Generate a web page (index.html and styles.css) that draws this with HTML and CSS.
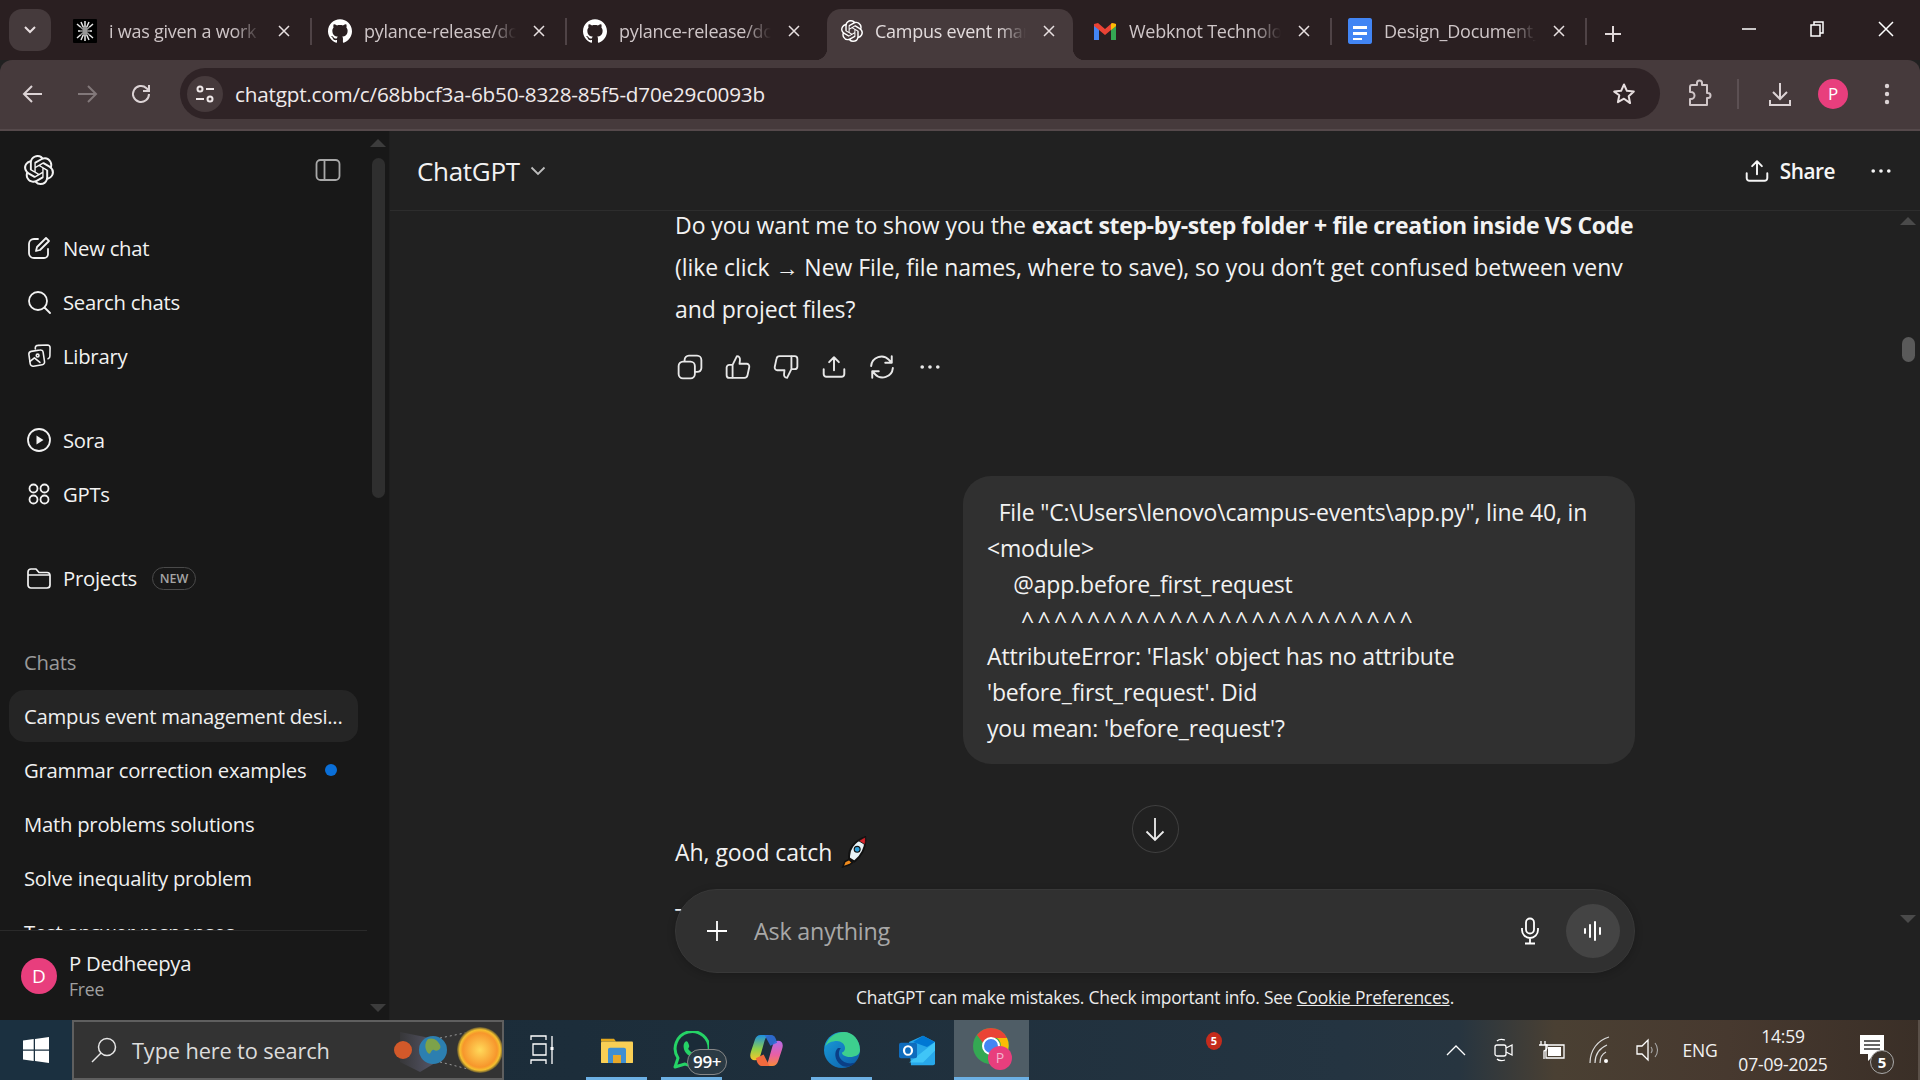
FILE: index.html
```html
<!DOCTYPE html>
<html lang="en">
<head>
<meta charset="utf-8">
<title>Campus event management</title>
<link rel="stylesheet" href="styles.css">
</head>
<body>
<svg class="defs" width="0" height="0">
  <symbol id="oai" viewBox="0 0 24 24"><path fill="currentColor" d="M22.2819 9.8211a5.9847 5.9847 0 0 0-.5157-4.9108 6.0462 6.0462 0 0 0-6.5098-2.9A6.0651 6.0651 0 0 0 4.9807 4.1818a5.9847 5.9847 0 0 0-3.9977 2.9 6.0462 6.0462 0 0 0 .7427 7.0966 5.98 5.98 0 0 0 .511 4.9107 6.051 6.051 0 0 0 6.5146 2.9001A5.9847 5.9847 0 0 0 13.2599 24a6.0557 6.0557 0 0 0 5.7718-4.2058 5.9894 5.9894 0 0 0 3.9977-2.9001 6.0557 6.0557 0 0 0-.7475-7.0729zm-9.022 12.6081a4.4755 4.4755 0 0 1-2.8764-1.0408l.1419-.0804 4.7783-2.7582a.7948.7948 0 0 0 .3927-.6813v-6.7369l2.02 1.1686a.071.071 0 0 1 .038.052v5.5826a4.504 4.504 0 0 1-4.4945 4.4944zm-9.6607-4.1254a4.4708 4.4708 0 0 1-.5346-3.0137l.142.0852 4.783 2.7582a.7712.7712 0 0 0 .7806 0l5.8428-3.3685v2.3324a.0804.0804 0 0 1-.0332.0615L9.74 19.9502a4.4992 4.4992 0 0 1-6.1408-1.6464zM2.3408 7.8956a4.485 4.485 0 0 1 2.3655-1.9728V11.6a.7664.7664 0 0 0 .3879.6765l5.8144 3.3543-2.0201 1.1685a.0757.0757 0 0 1-.071 0l-4.8303-2.7865A4.504 4.504 0 0 1 2.3408 7.872zm16.5963 3.8558L13.1038 8.364 15.1192 7.2a.0757.0757 0 0 1 .071 0l4.8303 2.7913a4.4944 4.4944 0 0 1-.6765 8.1042v-5.6772a.79.79 0 0 0-.407-.667zm2.0107-3.0231l-.142-.0852-4.7735-2.7818a.7759.7759 0 0 0-.7854 0L9.409 9.2297V6.8974a.0662.0662 0 0 1 .0284-.0615l4.8303-2.7866a4.4992 4.4992 0 0 1 6.6802 4.66zM8.3065 12.863l-2.02-1.1638a.0804.0804 0 0 1-.038-.0567V6.0742a4.4992 4.4992 0 0 1 7.3757-3.4537l-.142.0805L8.704 5.459a.7948.7948 0 0 0-.3927.6813zm1.0976-2.3654l2.602-1.4998 2.6069 1.4998v2.9994l-2.5974 1.4997-2.6067-1.4997Z"/></symbol>
  <symbol id="gh" viewBox="0 0 24 24"><path fill="currentColor" d="M12 .297c-6.63 0-12 5.373-12 12 0 5.303 3.438 9.8 8.205 11.385.6.113.82-.258.82-.577 0-.285-.01-1.04-.015-2.04-3.338.724-4.042-1.61-4.042-1.61C4.422 18.07 3.633 17.7 3.633 17.7c-1.087-.744.084-.729.084-.729 1.205.084 1.838 1.236 1.838 1.236 1.07 1.835 2.809 1.305 3.495.998.108-.776.417-1.305.76-1.605-2.665-.3-5.466-1.332-5.466-5.93 0-1.31.465-2.38 1.235-3.22-.135-.303-.54-1.523.105-3.176 0 0 1.005-.322 3.3 1.23.96-.267 1.98-.399 3-.405 1.02.006 2.04.138 3 .405 2.28-1.552 3.285-1.23 3.285-1.23.645 1.653.24 2.873.12 3.176.765.84 1.23 1.91 1.23 3.22 0 4.61-2.805 5.625-5.475 5.92.42.36.81 1.096.81 2.22 0 1.606-.015 2.896-.03 3.286 0 .315.21.69.825.57C20.565 22.092 24 17.592 24 12.297c0-6.627-5.373-12-12-12"/></symbol>
  <symbol id="x" viewBox="0 0 14 14"><path d="M2 2l10 10M12 2L2 12" fill="none" stroke="currentColor" stroke-width="1.5"/></symbol>
  <symbol id="share" viewBox="0 0 24 24"><path d="M12 15V3M7.5 7.5L12 3l4.500 4.500M2.500 14v4.500a2.500 2.500 0 0 0 2.500 2.500h14a2.500 2.500 0 0 0 2.500-2.500V14" fill="none" stroke="currentColor" stroke-width="1.8" stroke-linecap="round" stroke-linejoin="round"/></symbol>
  <symbol id="dots" viewBox="0 0 24 24"><g fill="currentColor"><circle cx="3.500" cy="12" r="2"/><circle cx="12" cy="12" r="2"/><circle cx="20.500" cy="12" r="2"/></g></symbol>
</svg>

<header class="tabstrip">
  <div class="tablist"><svg width="14" height="10" viewBox="0 0 14 10"><path d="M2 2l5 5 5-5" fill="none" stroke="#e8dfe0" stroke-width="2"/></svg></div>
  <div class="tab sep">
    <svg class="fav" width="24" height="24" viewBox="0 0 24 24"><rect width="24" height="24" fill="#000"/><path d="M12 2v20M4 5l16 14M20 5L4 19M5 12h14M8 3l8 18M16 3L8 21" stroke="#e8e8e8" stroke-width="1.500" fill="none"/><path d="M7 8h10v8H7z" fill="#000" opacity=".35"/></svg>
    <span class="tabtitle">i was given a work</span>
    <svg class="close" width="14" height="14"><use href="#x"/></svg>
  </div>
  <div class="tab sep">
    <svg class="fav" width="24" height="24"><use href="#gh"/></svg>
    <span class="tabtitle">pylance-release/docs</span>
    <svg class="close" width="14" height="14"><use href="#x"/></svg>
  </div>
  <div class="tab">
    <svg class="fav" width="24" height="24"><use href="#gh"/></svg>
    <span class="tabtitle">pylance-release/docs</span>
    <svg class="close" width="14" height="14"><use href="#x"/></svg>
  </div>
  <div class="tab tab-active">
    <svg class="fav" width="22" height="22"><use href="#oai"/></svg>
    <span class="tabtitle">Campus event management</span>
    <svg class="close" width="14" height="14"><use href="#x"/></svg>
  </div>
  <div class="tab sep">
    <svg class="fav" width="24" height="24" viewBox="0 0 24 20"><path d="M1 19V3l4-1 7 6 7-6 4 1v16h-5V9l-6 5-6-5v10z" fill="#ea4335"/><path d="M1 19V5l5 4v10z" fill="#4285f4"/><path d="M18 19V9l5-4v14z" fill="#34a853"/><path d="M18 9V3l1-1 4 1v2z" fill="#fbbc04"/></svg>
    <span class="tabtitle">Webknot Technologies</span>
    <svg class="close" width="14" height="14"><use href="#x"/></svg>
  </div>
  <div class="tab sep">
    <svg class="fav" width="24" height="26" viewBox="0 0 24 26"><rect width="24" height="26" rx="2" fill="#4285f4"/><path d="M5 8h14v3H5zM5 14h14v3H5zM5 20h9v2H5z" fill="#fff"/></svg>
    <span class="tabtitle">Design_Document_Final</span>
    <svg class="close" width="14" height="14"><use href="#x"/></svg>
  </div>
  <svg class="newtab" width="20" height="20" viewBox="0 0 20 20"><path d="M10 2v16M2 10h16" stroke="#e0d8d9" stroke-width="2"/></svg>
  <div class="winctl">
    <svg width="16" height="16" viewBox="0 0 16 16"><path d="M1 8h14" stroke="#fff" stroke-width="1.500"/></svg>
    <svg width="16" height="18" viewBox="0 0 16 18"><path d="M2 5h9v11H2zM5 5V2h9v11h-3" fill="none" stroke="#fff" stroke-width="1.500"/></svg>
    <svg width="18" height="18" viewBox="0 0 18 18"><path d="M2 2l14 14M16 2L2 16" stroke="#fff" stroke-width="1.500"/></svg>
  </div>
</header>

<nav class="toolbar">
  <div class="tool"><svg width="22" height="22" viewBox="0 0 22 22"><path d="M20 11H3M10 3l-8 8 8 8" fill="none" stroke="#dcd3d5" stroke-width="2"/></svg></div>
  <div class="tool"><svg width="22" height="22" viewBox="0 0 22 22"><path d="M2 11h17M12 3l8 8-8 8" fill="none" stroke="#82787a" stroke-width="2"/></svg></div>
  <div class="tool"><svg width="24" height="24" viewBox="0 0 24 24"><path d="M20 12a8 8 0 1 1-2.500-5.800L20 8.500M20 3v6h-6" fill="none" stroke="#dcd3d5" stroke-width="2"/></svg></div>
  <div class="omnibox">
    <div class="siteinfo"><svg width="22" height="22" viewBox="0 0 22 22"><g fill="none" stroke="#efe8e9" stroke-width="2"><circle cx="6" cy="6" r="2.500"/><path d="M12 6h8M2 16h8"/><circle cx="16" cy="16" r="2.500"/></g></svg></div>
    <span class="url">chatgpt.com/c/68bbcf3a-6b50-8328-85f5-d70e29c0093b</span>
    <svg class="star" width="24" height="24" viewBox="0 0 24 24"><path d="M12 2.500l2.900 6.300 6.900.8-5.100 4.700 1.400 6.800L12 16.700l-6.100 3.400 1.400-6.800L2.200 9.600l6.900-.8z" fill="none" stroke="#e8dfe0" stroke-width="2" stroke-linejoin="round"/></svg>
  </div>
  <div class="tool tool-ext"><svg width="26" height="30" viewBox="0 0 26 30"><path d="M6 6h5V4a2.500 2.500 0 0 1 5 0v2h5v8h1a2.500 2.500 0 0 1 0 5h-1v7H4v-6h1a3.500 3.500 0 0 0 0-7H4V8a2 2 0 0 1 2-2z" fill="none" stroke="#cfc5c7" stroke-width="2" stroke-linejoin="round"/></svg></div>
  <div class="tooldiv"></div>
  <div class="tool tool-dl"><svg width="24" height="26" viewBox="0 0 24 26"><path d="M12 2v15M5 11l7 7 7-7M2 19v5h20v-5" fill="none" stroke="#dcd3d5" stroke-width="2"/></svg></div>
  <div class="profile">P</div>
  <div class="tool tool-menu"><svg width="6" height="24" viewBox="0 0 6 24"><g fill="#dcd3d5"><circle cx="3" cy="4" r="2.200"/><circle cx="3" cy="12" r="2.200"/><circle cx="3" cy="20" r="2.200"/></g></svg></div>
</nav>

<div class="app">
  <aside class="sidebar">
    <div class="sidecol">
      <div class="sidetop">
        <div class="sidehead">
          <svg class="logo" width="30" height="30"><use href="#oai"/></svg>
          <svg width="26" height="24" viewBox="0 0 26 24"><g fill="none" stroke="#a8a8a8" stroke-width="1.800"><rect x="1.500" y="2" width="23" height="20" rx="4"/><path d="M9.500 2v20"/></g></svg>
        </div>
        <div class="navgroup">
          <div class="navrow"><svg width="24" height="24" viewBox="0 0 24 24"><g fill="none" stroke="currentColor" stroke-width="1.800" stroke-linecap="round" stroke-linejoin="round"><path d="M11 3H7a5 5 0 0 0-5 5v9a5 5 0 0 0 5 5h10a4 4 0 0 0 4-4v-5"/><path d="M9 15l1-4 9-9 3 3-9 9z"/></g></svg><span>New chat</span></div>
          <div class="navrow"><svg width="24" height="24" viewBox="0 0 24 24"><g fill="none" stroke="currentColor" stroke-width="1.800" stroke-linecap="round"><circle cx="11" cy="11" r="9"/><path d="M17.500 17.500L23 23"/></g></svg><span>Search chats</span></div>
          <div class="navrow"><svg width="26" height="26" viewBox="0 0 26 26"><g fill="none" stroke="currentColor" stroke-width="1.700" stroke-linecap="round" stroke-linejoin="round"><path d="M2 11a3 3 0 0 1 2.500-3L14 6.500a3 3 0 0 1 3.500 2.500l1.500 10a3 3 0 0 1-2.500 3.500L7 24a3 3 0 0 1-3.500-2.500z"/><path d="M9 5.500V4a2.500 2.500 0 0 1 2.500-2.500L22 1a3 3 0 0 1 3 3l-.2 9a3 3 0 0 1-2 3"/><circle cx="11.500" cy="12.500" r="1.500"/><path d="M3 19l5-4 6 5"/></g></svg><span>Library</span></div>
        </div>
        <div class="navgroup">
          <div class="navrow"><svg width="24" height="24" viewBox="0 0 24 24"><circle cx="12" cy="12" r="11" fill="none" stroke="currentColor" stroke-width="1.800"/><path d="M9.500 7.500l7 4.500-7 4.500z" fill="currentColor"/></svg><span>Sora</span></div>
          <div class="navrow"><svg width="24" height="24" viewBox="0 0 24 24"><g fill="none" stroke="currentColor" stroke-width="1.800"><circle cx="6.500" cy="6.500" r="4"/><circle cx="17.500" cy="6.500" r="4"/><circle cx="6.500" cy="17.500" r="4"/><circle cx="17.500" cy="17.500" r="4"/></g></svg><span>GPTs</span></div>
        </div>
        <div class="navgroup">
          <div class="navrow"><svg width="24" height="22" viewBox="0 0 24 22"><path d="M1 5a3 3 0 0 1 3-3h5l3 3.500h8a3 3 0 0 1 3 3V18a3 3 0 0 1-3 3H4a3 3 0 0 1-3-3zM1 8h22" fill="none" stroke="currentColor" stroke-width="1.700" stroke-linejoin="round"/></svg><span>Projects</span><span class="newpill">NEW</span></div>
        </div>
        <div class="chatlabel">Chats</div>
        <div class="chatrow chatrow-active"><span>Campus event management desi...</span></div>
        <div class="chatrow"><span>Grammar correction examples</span><i class="bluedot"></i></div>
        <div class="chatrow"><span>Math problems solutions</span></div>
        <div class="chatrow"><span>Solve inequality problem</span></div>
        <div class="chatrow"><span>Test answer responses</span></div>
      </div>
      <div class="userbox">
        <div class="uavatar">D</div>
        <div class="uinfo"><div class="uname">P Dedheepya</div><div class="uplan">Free</div></div>
      </div>
    </div>
    <div class="sidescroll">
      <i class="arrow-up"></i>
      <i class="side-thumb"></i>
      <i class="arrow-down"></i>
    </div>
  </aside>

  <main class="main">
    <div class="mainhead">
      <div class="modelname">ChatGPT<svg width="16" height="10" viewBox="0 0 16 10"><path d="M1.500 1.500L8 8l6.500-6.500" fill="none" stroke="#bdbdbd" stroke-width="1.800"/></svg></div>
      <div class="headright">
        <svg width="26" height="26"><use href="#share"/></svg>
        <span class="sharetxt">Share</span>
        <svg class="headdots" width="22" height="22"><use href="#dots"/></svg>
      </div>
    </div>
    <div class="mainbody">
      <div class="chat">
        <div class="thread">
          <p class="reply">Do you want me to show you the <b>exact step-by-step folder + file creation inside VS Code</b> (like click <span class="arr">→</span> New File, file names, where to save), so you don’t get confused between venv and project files?</p>
          <div class="actions">
            <svg width="26" height="26" viewBox="0 0 24 24"><g fill="none" stroke="currentColor" stroke-width="1.700"><rect x="1.500" y="7" width="15" height="15.500" rx="4"/><path d="M7 7V5.500a4 4 0 0 1 4-4h7.500a4 4 0 0 1 4 4V13a4 4 0 0 1-4 3.500h-2"/></g></svg>
            <svg width="26" height="26" viewBox="0 0 24 24"><g fill="none" stroke="currentColor" stroke-width="1.700" stroke-linejoin="round"><path d="M7 10l4-8c2 0 3 1.500 2.800 3.500L13.400 9H20a2.500 2.500 0 0 1 2.400 3l-1.600 7.500a3 3 0 0 1-3 2.500H7z"/><path d="M7 10H4a2.500 2.500 0 0 0-2.500 2.500v7A2.500 2.500 0 0 0 4 22h3"/></g></svg>
            <svg width="26" height="26" viewBox="0 0 24 24"><g fill="none" stroke="currentColor" stroke-width="1.700" stroke-linejoin="round"><path d="M17 14l-4 8c-2 0-3-1.500-2.800-3.500l.4-3.500H4a2.500 2.500 0 0 1-2.400-3l1.600-7.500a3 3 0 0 1 3-2.500H17z"/><path d="M17 14h3a2.500 2.500 0 0 0 2.500-2.500v-7A2.500 2.500 0 0 0 20 2h-3"/></g></svg>
            <svg width="26" height="26"><use href="#share"/></svg>
            <svg width="26" height="26" viewBox="0 0 24 24"><g fill="none" stroke="currentColor" stroke-width="1.800" stroke-linecap="round" stroke-linejoin="round"><path d="M2 11a9.500 9.500 0 0 1 16.500-5.500L21 8M21 2v6h-6"/><path d="M22 13a9.500 9.500 0 0 1-16.500 5.500L3 16M3 22v-6h6"/></g></svg>
            <svg width="22" height="22"><use href="#dots"/></svg>
          </div>
          <div class="bubble">  File "C:\Users\lenovo\campus-events\app.py", line 40, in
&lt;module&gt;
    <span class="deco">@app.before_first_request</span>
     <span class="carets">^^^^^^^^^^^^^^^^^^^^^^^^</span>
AttributeError: 'Flask' object has no attribute
'before_first_request'. Did
you mean: 'before_request'?</div>
          <p class="reply reply-next">Ah, good catch <svg class="rocket" width="27" height="32" viewBox="1 0 24 30"><path d="M8 21C7 13 12 5 23 1c1 9-3 17-10 23z" fill="#e8f2f6" stroke="#111" stroke-width="1.800"/><path d="M17 4.500L23 1c.5 3 .2 5-.3 7z" fill="#d8232a" stroke="#111" stroke-width=".8"/><circle cx="15.500" cy="12.500" r="2.800" fill="#2d9ed8" stroke="#111"/><path d="M8 22l-4 2-2 5 6-2 3-2z" fill="#f08a1c" stroke="#111" stroke-width="1.400"/></svg></p>
          <p class="reply reply-cut">That</p>
        </div>
      </div>
      <div class="composerzone">
        <div class="scrolldown"><svg width="24" height="26" viewBox="0 0 24 26"><path d="M12 2v22M3.500 15.500L12 24l8.500-8.500" fill="none" stroke="#ececec" stroke-width="1.800"/></svg></div>
        <div class="composer">
          <svg width="24" height="24" viewBox="0 0 24 24"><path d="M12 2v20M2 12h20" stroke="#fff" stroke-width="1.800"/></svg>
          <span class="placeholder">Ask anything</span>
          <svg class="mic" width="20" height="28" viewBox="0 0 20 28"><g fill="none" stroke="#fff" stroke-width="1.800"><rect x="6" y="1.500" width="8" height="15" rx="4"/><path d="M2 11v2a8 8 0 0 0 16 0v-2M10 21v5M5 26.500h10"/></g></svg>
          <div class="voicebtn"><svg width="24" height="22" viewBox="0 0 24 22"><path d="M4 9v4M9 5v12M14 2v18M19 8v6" stroke="#fff" stroke-width="2" stroke-linecap="round"/></svg></div>
        </div>
        <div class="disclaimer">ChatGPT can make mistakes. Check important info. See <u>Cookie Preferences</u>.</div>
      </div>
      <div class="mainscroll">
        <i class="arrow-up"></i>
        <i class="main-thumb"></i>
        <i class="arrow-down"></i>
      </div>
    </div>
  </main>
</div>

<footer class="taskbar">
  <div class="start"><svg width="26" height="26" viewBox="0 0 26 26"><path d="M0 3.600l10.700-1.500v10.300H0zM12 1.900L26 0v12.400H12zM0 13.700h10.700V24L0 22.500zM12 13.700h14V26l-14-2z" fill="#fff"/></svg></div>
  <div class="searchbox">
    <svg width="26" height="26" viewBox="0 0 26 26"><g fill="none" stroke="#e6e6e6" stroke-width="1.500"><circle cx="16" cy="10" r="8.500"/><path d="M10 16L1 25"/></g></svg>
    <span class="searchtext">Type here to search</span>
    <svg class="eclipse" width="122" height="56" viewBox="-10 0 122 56"><defs><radialGradient id="sun"><stop offset="0" stop-color="#ffd95a"/><stop offset=".75" stop-color="#f7962c"/><stop offset=".88" stop-color="#f5c12e"/><stop offset="1" stop-color="#5a5030"/></radialGradient><linearGradient id="beam" x1="0" x2="1"><stop offset="0" stop-color="#6a6a86" stop-opacity=".1"/><stop offset="1" stop-color="#6a6a86"/></linearGradient></defs><path d="M0 10l40 8v20L20 50 0 40z" fill="url(#beam)" opacity=".7"/><circle cx="3" cy="28" r="9" fill="#d2592a"/><circle cx="33" cy="28" r="14" fill="#2c7fb0"/><path d="M28 17c6-2 10 2 12 6s-3 7-6 5-3 6-6 3-4-10 0-14z" fill="#7da24a"/><path d="M40 16l40-8M40 40l40 10" stroke="#999" stroke-dasharray="2 3" fill="none"/><circle cx="80" cy="28" r="23" fill="url(#sun)"/></svg>
  </div>
  <div class="tbicon"><svg width="24" height="30" viewBox="0 0 24 30"><path d="M1 5V1h15v4M3 9h13v11H3zM1 29v-4h15v4M22 1v28" fill="none" stroke="#fff" stroke-width="1.300"/><rect x="20.500" y="12" width="3" height="3" fill="#fff"/></svg></div>
  <div class="tbicon tb-open"><svg width="32" height="27" viewBox="0 0 32 30" preserveAspectRatio="none"><path d="M0 2h13l2 3h-15z" fill="#e3a81d"/><rect y="5" width="32" height="24" rx="1" fill="#f9cf55"/><path d="M7 29V14a2 2 0 0 1 2-2h14a2 2 0 0 1 2 2v15h-5v-9h-8v9z" fill="#3f8fd2"/><rect x="12" y="20" width="8" height="9" fill="#e8a92a"/></svg></div>
  <div class="tbicon tb-open"><svg class="wa" width="36" height="38" viewBox="0 0 36 38"><path d="M2 36l3-9A17 17 0 1 1 12 33z" fill="#1a2b38" stroke="#25d366" stroke-width="3" stroke-linejoin="round"/><path d="M12 11c2-2 3 0 4 3s-2 3 0 5 3 3 4 2 2-2 5 0 1 4-1 5-8 0-11-4-3-9-1-11z" fill="#25d366"/></svg><span class="wabadge">99+</span></div>
  <div class="tbicon"><svg width="33" height="31" viewBox="0 0 34 32"><defs><linearGradient id="cpa" x1="0" y1="0" x2="0" y2="1"><stop offset="0" stop-color="#1c8fe0"/><stop offset=".55" stop-color="#8fd04a"/><stop offset="1" stop-color="#f7c52b"/></linearGradient><linearGradient id="cpb" x1="0" y1="0" x2="0" y2="1"><stop offset="0" stop-color="#b56be8"/><stop offset=".55" stop-color="#e85fa5"/><stop offset="1" stop-color="#f78a3a"/></linearGradient></defs><path d="M11 0h9c-3 1-4 3-5 6l-4 14c-1 4-3 6-6 6-4 0-6-3-4-9L5 5c1-3 3-5 6-5z" fill="url(#cpa)"/><path d="M23 32h-9c3-1 4-3 5-6l4-14c1-4 3-6 6-6 4 0 6 3 4 9l-4 12c-1 3-3 5-6 5z" fill="url(#cpb)"/><path d="M15 0h7c2 0 4 2 5 5l1 3-7 3z" fill="#2f6fd8" opacity=".9"/><path d="M20 32h-8c-2 0-4-2-5-5l-1-3 8-4z" fill="#f26a3d"/></svg></div>
  <div class="tbicon tb-open"><svg width="36" height="36" viewBox="0 0 36 36"><defs><linearGradient id="edge" x1="0" y1="0" x2="1" y2="1"><stop offset="0" stop-color="#1aa0dc"/><stop offset="1" stop-color="#0c5aa6"/></linearGradient></defs><circle cx="18" cy="18" r="18" fill="url(#edge)"/><path d="M1 15C4 5 12 0 20 0c9 0 16 8 16 18 0 5-5 7-10 7-4 0-8-2-8-4 0-1 3-1 3-5s-4-7-8-7C8 9 3 11 1 15z" fill="#3dcf8e"/><path d="M14 16c-4 3-4 12 3 17 4 3 11 2 15-3-6 3-13 1-16-4-2-4-1-8 1-10z" fill="#0b3f86"/></svg></div>
  <div class="tbicon"><svg width="36" height="31" viewBox="0 0 36 36" preserveAspectRatio="none"><path d="M10 8l14-7 12 7v25a2 2 0 0 1-2 2H12z" fill="#28a8ea"/><path d="M14 8l10-7 12 7-8 6z" fill="#0078d4"/><path d="M36 8v10l-12 14H10z" fill="#50d9ff" opacity=".6"/><rect y="9" width="18" height="18" rx="2" fill="#0f6cbd"/><ellipse cx="9" cy="18" rx="4" ry="5" fill="none" stroke="#fff" stroke-width="2.200"/></svg></div>
  <div class="tbicon tb-chrome"><svg class="chromeicon" width="40" height="44" viewBox="0 0 40 44"><circle cx="18" cy="18" r="18" fill="#34a853"/><path d="M18 0a18 18 0 0 1 16 10H18a8 8 0 0 0-8 5L4 7A18 18 0 0 1 18 0z" fill="#ea4335"/><path d="M34 10a18 18 0 0 1-12 25l5-15a8 8 0 0 0-3-10z" fill="#fbbc04"/><circle cx="18" cy="18" r="8" fill="#4285f4" stroke="#fff" stroke-width="2"/><circle cx="27" cy="30" r="12" fill="#e83e7d"/><text x="27" y="35" text-anchor="middle" class="chromep">P</text></svg></div>
  <span class="redbadge">5</span>
  <div class="tray">
    <div class="trayitem"><svg width="20" height="12" viewBox="0 0 20 12"><path d="M1 11l9-9 9 9" fill="none" stroke="#fff" stroke-width="1.300"/></svg></div>
    <div class="trayitem"><svg width="20" height="26" viewBox="0 0 20 26"><g fill="none" stroke="#fff" stroke-width="1.300"><rect x="1" y="8" width="11" height="11" rx="2"/><path d="M12 11l6-3v10l-6-3M3 4c2-2 5-2 8-1M3 22c2 2 5 2 8 1"/></g></svg></div>
    <div class="trayitem"><svg width="26" height="20" viewBox="0 0 26 20"><path d="M7 5h18v13H7z" fill="none" stroke="#fff" stroke-width="1.300"/><path d="M9 7h13v9H9z" fill="#fff"/><path d="M2 1v4M6 1v4M0 5h8v3a4 4 0 0 1-3 3v8" fill="none" stroke="#fff" stroke-width="1.300"/></svg></div>
    <div class="trayitem"><svg width="22" height="30" viewBox="0 0 22 30"><g fill="none" stroke="#ddd" stroke-width="1.200"><path d="M1 28C1 15 9 5 20 2"/><path d="M6 28c0-9 5-15 12-18"/><path d="M11 28c0-5 2-9 6-11"/></g><circle cx="17" cy="26" r="2" fill="#fff"/></svg></div>
    <div class="trayitem"><svg width="24" height="30" viewBox="0 0 24 30"><path d="M1 11h5l6-6v20l-6-6H1z" fill="none" stroke="#fff" stroke-width="1.300"/><path d="M15 12a5 5 0 0 1 0 6M19 8a11 11 0 0 1 0 14" fill="none" stroke="#aaa" stroke-width="1.100"/></svg></div>
    <div class="traylang">ENG</div>
    <div class="clock"><div>14:59</div><div>07-09-2025</div></div>
    <div class="notif"><svg width="24" height="30" viewBox="0 0 24 30"><path d="M0 0h24v19H15l-7 7v-7H0z" fill="#fff"/><path d="M4 6h16M4 10h16M4 14h16" stroke="#333" stroke-width="1.300"/></svg><span class="notifbadge">5</span></div>
  </div>
</footer>
</body>
</html>
```
FILE: styles.css
```css
* { box-sizing: border-box; }
html, body { margin: 0; height: 100%; }
body {
  width: 1920px; height: 1080px; overflow: hidden;
  display: flex; flex-direction: column;
  background: #212121; color: #ececec;
  font-family: "Open Sans", "Liberation Sans", sans-serif;
}
.defs { position: absolute; }
svg { display: block; flex: none; }
i { display: block; }

/* tab strip */
.tabstrip { height: 60px; flex: none; background: #2a1f21; display: flex; align-items: flex-end; padding-left: 9px; }
.tablist { width: 42px; height: 42px; margin-bottom: 9px; margin-right: 6px; border-radius: 13px; background: #453a3c; display: flex; align-items: center; justify-content: center; }
.tab { width: 255px; height: 51px; flex: none; display: flex; align-items: center; padding: 0 21px 7px 16px; color: #fff; position: relative; }
.tab.sep::after { content: ""; position: absolute; right: 0; top: 9px; width: 2px; height: 27px; background: #4f4346; }
.fav { margin-right: 12px; border-radius: 1px; }
.tabtitle { flex: 1; min-width: 0; overflow: hidden; white-space: nowrap; font-size: 18px; letter-spacing: -.25px; color: #cfc6c8; -webkit-mask-image: linear-gradient(90deg, #000 82%, transparent 100%); mask-image: linear-gradient(90deg, #000 82%, transparent 100%); }
.close { color: #e8e0e1; margin-left: 16px; }
.tab-active { background: #463a3c; border-radius: 14px 14px 0 0; padding-left: 14px; margin-left: 5px; width: 246px; padding-right: 17px; }
.tab-active .tabtitle { color: #e3dcdd; }
.tab-active + .tab { margin-left: 4px; }
.tab-active::before, .tab-active::after { content: ""; position: absolute; bottom: 0; width: 12px; height: 12px; }
.tab-active::before { left: -12px; background: radial-gradient(circle at 0 0, transparent 12px, #463a3c 12.500px); }
.tab-active::after { right: -12px; background: radial-gradient(circle at 100% 0, transparent 12px, #463a3c 12.500px); }
.newtab { margin: 0 0 16px 16px; }
.winctl { margin-left: auto; display: flex; align-items: center; height: 100%; padding-bottom: 2px; gap: 52px; padding-right: 25px; }

/* toolbar */
.toolbar { height: 71px; flex: none; background: #463a3c; border-bottom: 2px solid #55494b; border-radius: 12px 12px 0 0; display: flex; align-items: center; padding: 0 0 2px 6px; }
.tool { width: 54px; height: 48px; display: flex; align-items: center; justify-content: center; flex: none; }
.omnibox { margin-left: 12px; width: 1480px; height: 51px; border-radius: 26px; background: #2f2326; display: flex; align-items: center; padding-left: 7px; padding-right: 24px; }
.siteinfo { width: 36px; height: 36px; border-radius: 50%; background: #463a3c; display: flex; align-items: center; justify-content: center; }
.url { margin-left: 12px; font-size: 20.700px; letter-spacing: -.2px; color: #f0eaeb; white-space: nowrap; }
.star { margin-left: auto; }
.tool-ext { margin-left: 12px; }
.tooldiv { width: 2px; height: 30px; background: #5c5053; margin-left: 11px; }
.tool-dl { margin-left: 14px; }
.profile { width: 30px; height: 30px; border-radius: 50%; background: #e83e7d; color: #fff; display: flex; align-items: center; justify-content: center; font-size: 17px; margin-left: 11px; }
.tool-menu { margin-left: 12px; }

/* layout */
.app { flex: 1; min-height: 0; display: flex; }

/* sidebar */
.sidebar { width: 390px; flex: none; background: #181818; display: flex; border-right: 1px solid #1e1e1e; }
.sidecol { width: 367px; display: flex; flex-direction: column; }
.sidetop { flex: 1; min-height: 0; overflow: hidden; }
.sidehead { height: 78px; display: flex; align-items: center; justify-content: space-between; padding: 0 26px 0 24px; }
.sidehead .logo { color: #f2f2f2; }
.navgroup { padding-top: 12px; padding-bottom: 18px; margin-bottom: 0; }
.navgroup + .navgroup { padding-top: 0; margin-top: 12px; }
.navrow { height: 54px; display: flex; align-items: center; padding-left: 27px; gap: 12px; font-size: 20.300px; letter-spacing: -.25px; color: #f2f2f2; }
.navrow svg { width: 24px; height: 24px; }
.newpill { margin-left: 3px; height: 23px; padding: 0 7px; border: 1px solid #4a4a4a; border-radius: 12px; font-size: 12.500px; font-weight: 600; color: #a5a5a5; display: flex; align-items: center; letter-spacing: 0; }
.chatlabel { height: 54px; display: flex; align-items: center; padding-left: 24px; font-size: 20.300px; letter-spacing: -.25px; color: #9a9a9a; margin-top: 12px; }
.chatrow { height: 54px; padding: 1px 0; margin-left: 9px; margin-right: 9px; padding-left: 15px; padding-right: 18px; display: flex; align-items: center; justify-content: space-between; font-size: 20.300px; letter-spacing: -.25px; color: #f0f0f0; border-radius: 16px; white-space: nowrap; }
.chatrow-active { background: #252525; background-clip: content-box; padding: 1px 0; }
.chatrow-active span { padding-left: 15px; }
.bluedot { width: 12px; height: 12px; border-radius: 50%; background: #0a6fd8; margin-right: 3px; }
.userbox { height: 90px; flex: none; border-top: 1px solid #2a2a2a; display: flex; align-items: center; padding: 0 0 0 21px; gap: 12px; }
.uavatar { width: 36px; height: 36px; border-radius: 50%; background: #e83e7d; color: #fff; font-size: 19px; display: flex; align-items: center; justify-content: center; }
.uinfo { line-height: 26px; }
.uname { font-size: 20.300px; letter-spacing: -.25px; color: #f0f0f0; }
.uplan { font-size: 17.500px; letter-spacing: -.2px; color: #a0a0a0; }
.sidescroll { width: 22px; display: flex; flex-direction: column; align-items: center; padding: 8px 0 8px 0; margin-left: 0; }
.arrow-up { width: 0; height: 0; border-left: 8px solid transparent; border-right: 8px solid transparent; border-bottom: 8px solid #3c3c3c; flex: none; }
.arrow-down { width: 0; height: 0; border-left: 8px solid transparent; border-right: 8px solid transparent; border-top: 8px solid #3c3c3c; flex: none; margin-top: auto; }
.side-thumb { width: 13px; height: 340px; margin-top: 11px; border-radius: 7px; background: #2f2f2f; }

/* main */
.main { flex: 1; min-width: 0; display: flex; flex-direction: column; background: #212121; }
.mainhead { height: 80px; flex: none; border-bottom: 1px solid #2d2d2d; display: flex; align-items: center; justify-content: space-between; padding: 0 28px 0 27px; }
.modelname { display: flex; align-items: center; gap: 10px; font-size: 26px; letter-spacing: -.3px; color: #f2f2f2; }
.headright { display: flex; align-items: center; color: #f5f5f5; }
.sharetxt { margin-left: 10px; font-size: 20.800px; font-weight: 600; letter-spacing: -.5px; }
.headdots { margin-left: 35px; }
.mainbody { flex: 1; min-height: 0; display: grid; grid-template: minmax(0, 1fr) / minmax(0, 1fr); }
.chat { grid-area: 1 / 1; overflow: hidden; }
.thread { width: 960px; margin: -7px auto 0; }
.reply { margin: 0; font-size: 23px; line-height: 42px; letter-spacing: -.05px; color: #f2f2f2; }
.reply b { font-weight: 700; letter-spacing: -.33px; }
.arr { font-family: "Liberation Sans", sans-serif; line-height: 0; }
.actions { display: flex; align-items: center; gap: 22px; height: 36px; margin-top: 19px; padding-left: 2px; color: #e8e8e8; }
.actions svg { width: 26px; height: 26px; }
.actions svg:last-child { width: 22px; height: 22px; margin-left: 2px; }
.bubble { margin: 91px 0 0 auto; width: 672px; height: 288px; padding: 18px 24px; border-radius: 28px; background: #303030; white-space: pre; font-size: 23px; line-height: 36px; letter-spacing: -.16px; color: #f2f2f2; }
.deco { margin-left: 3px; }
.carets { letter-spacing: 3.300px; margin-left: 5px; }
.reply-next { margin-top: 67px; display: flex; align-items: center; white-space: pre; }
.rocket { margin-left: 3px; }
.reply-cut { margin-top: 23px; }
.composerzone { grid-area: 1 / 1; align-self: end; display: flex; flex-direction: column; align-items: center; }
.scrolldown { width: 47px; height: 48px; border-radius: 50%; background: #212121; border: 1px solid #3f3f3f; display: flex; align-items: center; justify-content: center; margin-bottom: 36px; }
.composer { width: 960px; height: 84px; border-radius: 42px; background: #303030; border: 1px solid #383838; box-shadow: 0 2px 8px rgba(0,0,0,.2); display: flex; align-items: center; padding: 0 14px 0 29px; }
.placeholder { margin-left: 25px; font-size: 23.300px; letter-spacing: -.2px; color: #a8a8a8; }
.mic { margin-left: auto; }
.voicebtn { width: 54px; height: 54px; margin-left: 26px; border-radius: 50%; background: #444; display: flex; align-items: center; justify-content: center; }
.disclaimer { height: 47px; padding-top: 12px; font-size: 17.400px; letter-spacing: -.2px; color: #ececec; white-space: nowrap; }
.mainscroll { grid-area: 1 / 1; justify-self: end; width: 24px; display: flex; flex-direction: column; align-items: center; padding-top: 6px; padding-right: 0; height: 712px; }
.mainscroll .arrow-up { border-bottom-color: #4a4a4a; }
.mainscroll .arrow-down { border-top-color: #4a4a4a; }
.main-thumb { width: 13px; height: 25px; margin-top: 112px; border-radius: 7px; background: #5a5a5a; }

/* taskbar */
.taskbar { height: 60px; flex: none; display: flex; align-items: stretch; background: linear-gradient(90deg, #1a2b38 0, #1c2d3a 30%, #243441 70%, #273540 76%, #4a4033 81%, #47392f 90%, #3a2f27 100%); }
.start { width: 72px; flex: none; background: #1b3040; display: flex; align-items: center; justify-content: center; }
.searchbox { width: 432px; flex: none; background: #333; border: 2px solid #5f5f5f; border-bottom-width: 2px; display: flex; align-items: center; padding-left: 17px; overflow: hidden; }
.searchtext { margin-left: 15px; padding-top: 1px; font-size: 21.800px; letter-spacing: -.15px; color: #dcdcdc; white-space: nowrap; }
.eclipse { margin-left: auto; margin-right: -10px; }
.tbicon { width: 75px; flex: none; display: flex; align-items: center; justify-content: center; position: relative; }
.tb-open { background: linear-gradient(#6cb0e4, #6cb0e4) center bottom / 61px 3px no-repeat; }
.tb-chrome { background: linear-gradient(#6cb0e4, #6cb0e4) center bottom / 100% 3px no-repeat, #4f5d66; }
.wa { margin-left: -2px; }
.wabadge { position: absolute; left: 33px; top: 29px; height: 26px; padding: 0 5px; border: 1px solid #888; border-radius: 13px; background: #2b3a44; color: #fff; font-size: 17px; font-weight: 600; line-height: 24px; letter-spacing: -.3px; }
.chromeicon { margin-left: 2px; }
.chromep { font-family: "Open Sans", sans-serif; font-size: 14px; fill: #f2b4cd; }
.redbadge { width: 16px; height: 18px; margin: 12px 0 0 177px; border-radius: 50%; background: #c42b1c; color: #fff; font-size: 11px; font-weight: 700; line-height: 18px; text-align: center; }
.tray { margin-left: auto; display: flex; align-items: center; padding-right: 13px; border-right: 2px solid #5a5048; }
.trayitem { width: 48px; display: flex; align-items: center; justify-content: center; }
.traylang { width: 56px; text-align: center; font-size: 17.500px; letter-spacing: -.2px; color: #f2f2f2; }
.clock { width: 110px; text-align: center; font-size: 17.500px; line-height: 28px; letter-spacing: -.2px; color: #f2f2f2; }
.notif { width: 67px; height: 60px; position: relative; display: flex; align-items: center; justify-content: center; }
.notifbadge { position: absolute; left: 32px; top: 30px; width: 24px; height: 24px; border-radius: 50%; border: 1px solid #aaa; background: #3e352d; color: #fff; font-size: 15px; font-weight: 700; line-height: 22px; text-align: center; }
```
